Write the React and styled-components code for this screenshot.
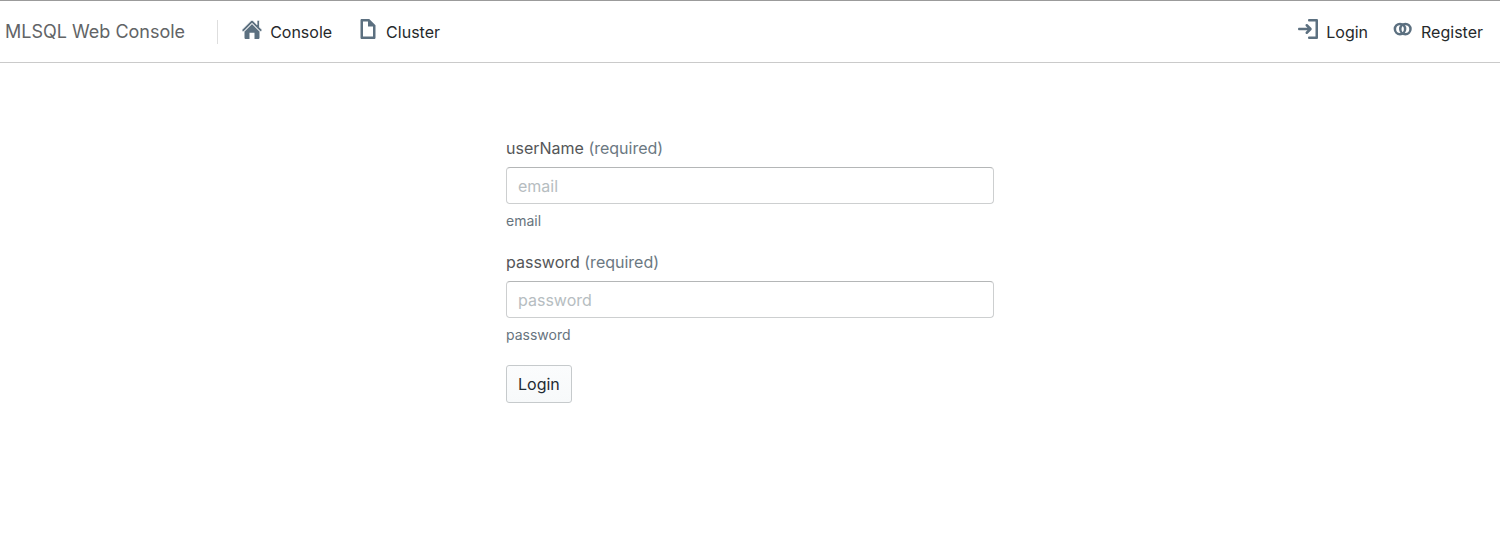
import React from "react";
import styled, { createGlobalStyle } from "styled-components";

const GlobalStyle = createGlobalStyle`
  *, *::before, *::after { box-sizing: border-box; }
  body {
    margin: 0;
    background: #fff;
    color: #26292b;
    font-family: Inter, "Liberation Sans", sans-serif;
    font-size: 16px;
    line-height: 22px;
  }
`;

const Navbar = styled.header`
  display: flex;
  align-items: center;
  justify-content: space-between;
  height: 63px;
  padding: 0 17px 0 5px;
  border-top: 1px solid #9b9b9b;
  border-bottom: 1px solid #cacaca;
`;

const NavGroup = styled.nav`
  display: flex;
  align-items: center;
  gap: ${({ $gap }) => $gap}px;
`;

const Brand = styled.span`
  color: #626466;
  font-size: 18px;
`;

const Divider = styled.span`
  width: 1px;
  height: 24px;
  margin: 0 24px 0 32px;
  background: #dedede;
`;

const NavLink = styled.a`
  display: flex;
  align-items: center;
  gap: 8px;
  color: inherit;
  text-decoration: none;
`;

const Icon = styled.svg`
  width: 20px;
  height: 20px;
  margin-bottom: 6px;
  fill: #5c7080;
`;

const LoginForm = styled.form`
  display: flex;
  flex-direction: column;
  gap: 20px;
  max-width: 488px;
  margin: 74px auto 0;
`;

const Field = styled.div`
  display: flex;
  flex-direction: column;
`;

const Label = styled.label`
  margin-bottom: 8px;
  color: #545658;
`;

const Required = styled.span`
  color: #6b7882;
`;

const TextInput = styled.input`
  height: 37px;
  padding: 0 11px;
  border: 1px solid #cdcfd0;
  border-top-color: #b4b6b7;
  border-radius: 4px;
  background: #fff;
  color: inherit;
  font: inherit;
  &::placeholder { color: #b6bdc1; opacity: 1; }
`;

const Helper = styled.span`
  margin-top: 7px;
  color: #67747e;
  font-size: 14px;
  line-height: 20px;
`;

const Button = styled.button`
  align-self: flex-start;
  height: 38px;
  padding: 0 11px;
  border: 1px solid #c6cacc;
  border-radius: 3px;
  background: linear-gradient(#fbfcfd, #f7f9fa);
  color: #1f2a33;
  font: inherit;
`;

const HomeIcon = () => (
  <Icon viewBox="0 0 16 16" aria-hidden="true">
    <path d="M2 10l6-6 6 6v5c0 .55-.45 1-1 1h-3v-5H6v5H3c-.55 0-1-.45-1-1z" />
    <path d="M15.71 8.29L14 6.59V2c0-.55-.45-1-1-1s-1 .45-1 1v2.59L8.71 1.29a1.003 1.003 0 0 0-1.42 0l-7 7a1.003 1.003 0 0 0 1.42 1.42L8 3.41l6.29 6.29a1.003 1.003 0 0 0 1.42-1.41z" stroke="#fff" strokeWidth=".6" />
  </Icon>
);

const DocumentIcon = () => (
  <Icon viewBox="0 0 16 16" aria-hidden="true">
    <path d="M9 0H3c-.55 0-1 .45-1 1v14c0 .55.45 1 1 1h10c.55 0 1-.45 1-1V5L9 0zm3 14H4V2h4v4h4v8z" />
  </Icon>
);

const LogInIcon = () => (
  <Icon viewBox="0 0 16 16" aria-hidden="true">
    <path d="M11 8c0-.28-.11-.53-.29-.71l-3-3a1.003 1.003 0 0 0-1.42 1.42L7.59 7H1c-.55 0-1 .45-1 1s.45 1 1 1h6.59L6.3 10.29c-.19.18-.3.43-.3.71a1.003 1.003 0 0 0 1.71.71l3-3c.18-.18.29-.43.29-.71zm4-8H9c-.55 0-1 .45-1 1s.45 1 1 1h5v12H9c-.55 0-1 .45-1 1s.45 1 1 1h6c.55 0 1-.45 1-1V1c0-.55-.45-1-1-1z" />
  </Icon>
);

const RingsIcon = () => (
  <Icon viewBox="0 0 16 16" aria-hidden="true">
    <g fill="none" stroke="#5c7080" strokeWidth="2">
      <circle cx="5.6" cy="8" r="4.1" />
      <circle cx="9.9" cy="8" r="4.1" />
    </g>
  </Icon>
);

function FormField({ name, type, hint, autoComplete }) {
  return (
    <Field>
      <Label htmlFor={name}>
        {name} <Required>(required)</Required>
      </Label>
      <TextInput
        id={name}
        name={name}
        type={type}
        placeholder={hint}
        autoComplete={autoComplete}
        aria-describedby={`${name}-hint`}
      />
      <Helper id={`${name}-hint`}>{hint}</Helper>
    </Field>
  );
}

export default function App() {
  return (
    <>
      <GlobalStyle />
      <Navbar>
        <NavGroup $gap={0}>
          <Brand>MLSQL Web Console</Brand>
          <Divider />
          <NavGroup as="div" $gap={26}>
            <NavLink href="#console"><HomeIcon />Console</NavLink>
            <NavLink href="#cluster"><DocumentIcon />Cluster</NavLink>
          </NavGroup>
        </NavGroup>
        <NavGroup $gap={25}>
          <NavLink href="#login"><LogInIcon />Login</NavLink>
          <NavLink href="#register"><RingsIcon />Register</NavLink>
        </NavGroup>
      </Navbar>
      <main>
        <LoginForm onSubmit={(event) => event.preventDefault()}>
          <FormField name="userName" type="text" hint="email" autoComplete="username" />
          <FormField name="password" type="password" hint="password" autoComplete="current-password" />
          <Button type="submit">Login</Button>
        </LoginForm>
      </main>
    </>
  );
}
